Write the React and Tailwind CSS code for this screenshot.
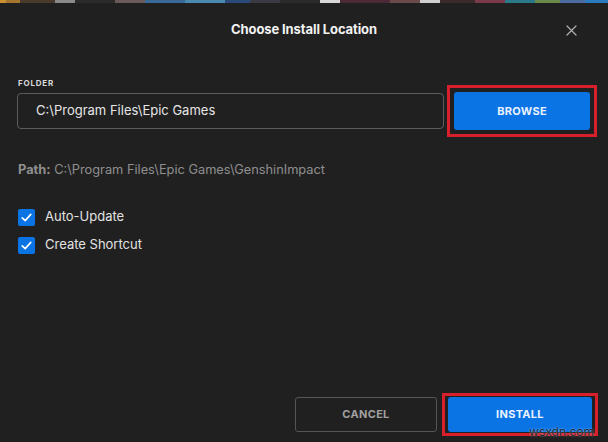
import React from "react";

function Check() {
  return (
    <span className="w-[17px] h-[17px] rounded-[2px] bg-[#0b74e5] flex items-center justify-center shrink-0">
      <svg width="13" height="13" viewBox="0 0 13 13" fill="none">
        <path d="M2.2 6.8 L5.2 9.6 L10.8 3.4" stroke="#ffffff" strokeWidth="1.6" strokeLinecap="round" strokeLinejoin="round" />
      </svg>
    </span>
  );
}

export default function App() {
  return (
    <div
      className="w-[608px] h-[442px] bg-[#202020] flex flex-col relative overflow-hidden"
      style={{ fontFamily: "Inter, 'Noto Sans', sans-serif" }}
    >
      <div className="h-[3px] flex shrink-0">
        <div className="w-[6px] bg-[#c9902f]" />
        <div className="w-[14px] bg-[#a5762e]" />
        <div className="w-[35px] bg-[#4a3a2c]" />
        <div className="w-[20px] bg-[#8a8a8a]" />
        <div className="w-[40px] bg-[#2a2a2a]" />
        <div className="w-[30px] bg-[#6a5a5a]" />
        <div className="w-[40px] bg-[#3a6a9a]" />
        <div className="w-[40px] bg-[#4a8ab0]" />
        <div className="w-[25px] bg-[#2a4a7a]" />
        <div className="w-[30px] bg-[#3a3a44]" />
        <div className="w-[40px] bg-[#2a2a2a]" />
        <div className="w-[20px] bg-[#d8d8d8]" />
        <div className="w-[50px] bg-[#4a2a34]" />
        <div className="w-[30px] bg-[#6a4a4a]" />
        <div className="w-[20px] bg-[#cfcfcf]" />
        <div className="w-[35px] bg-[#3a2a2a]" />
        <div className="w-[30px] bg-[#7a3a4a]" />
        <div className="w-[30px] bg-[#2a7a8a]" />
        <div className="w-[25px] bg-[#6a8a4a]" />
        <div className="w-[25px] bg-[#4a6aa0]" />
        <div className="flex-1 bg-[#2a7ac0]" />
      </div>

      <div className="h-[53px] flex items-center justify-center relative shrink-0 pt-[1px]">
        <span className="text-[13px] font-bold text-[#f2f2f2] tracking-[-0.1px]">Choose Install Location</span>
        <svg className="absolute right-[31px] top-[22px]" width="11" height="11" viewBox="0 0 11 11" fill="none">
          <path d="M1 1 L10 10 M10 1 L1 10" stroke="#b0b0b0" strokeWidth="1.2" strokeLinecap="round" />
        </svg>
      </div>

      <div className="pl-[17px] pr-[11px] flex flex-col">
        <div className="mt-[22px] h-[10px] leading-[10px] text-[8px] font-bold tracking-[0.8px] text-[#d8d8d8] pl-[1px]">
          FOLDER
        </div>
        <div className="mt-[5px] flex items-center gap-[3px]">
          <div className="w-[427px] h-[36px] rounded-[4px] border border-[#5c5c5c] flex items-center pl-[18px] text-[13px] text-[#e6e6e6]">
            C:\Program Files\Epic Games
          </div>
          <div className="-my-[8px] border-[3px] border-[#d7202b] p-[4px]">
            <button className="w-[136px] h-[38px] rounded-[3px] bg-[#0b74e5] text-[11px] font-bold tracking-[0.3px] text-[#eaf2ff]">
              BROWSE
            </button>
          </div>
        </div>

        <div className="mt-[32px] h-[18px] leading-[18px] text-[12.8px] text-[#8f8f8f] pl-[1px]">
          <span className="font-bold">Path:</span> C:\Program Files\Epic Games\GenshinImpact
        </div>

        <div className="mt-[28px] flex flex-col gap-[8px] pl-[1px]">
          <div className="h-[20px] flex items-center gap-[10px]">
            <Check />
            <span className="text-[13px] text-[#e2e2e2]">Auto-Update</span>
          </div>
          <div className="h-[20px] flex items-center gap-[10px]">
            <Check />
            <span className="text-[13px] text-[#e2e2e2]">Create Shortcut</span>
          </div>
        </div>
      </div>

      <div className="mt-auto pb-[6px] pr-[10px] flex items-center justify-end gap-[5px]">
        <button className="w-[142px] h-[35px] rounded-[3px] border border-[#555555] text-[11px] font-bold tracking-[0.3px] text-[#a0a0a0]">
          CANCEL
        </button>
        <div className="border-[3px] border-[#d7202b] px-[3px] py-[1px]">
          <button className="w-[144px] h-[35px] rounded-[3px] bg-[#0b74e5] text-[11px] font-bold tracking-[0.3px] text-[#eaf2ff]">
            INSTALL
          </button>
        </div>
      </div>

      <span
        className="absolute right-[14px] bottom-[4px] text-[12px] text-[#1e2a36] leading-none"
        style={{ textShadow: "0 0 2px rgba(255,255,255,0.6)" }}
      >
        wsxdn.com
      </span>
    </div>
  );
}
